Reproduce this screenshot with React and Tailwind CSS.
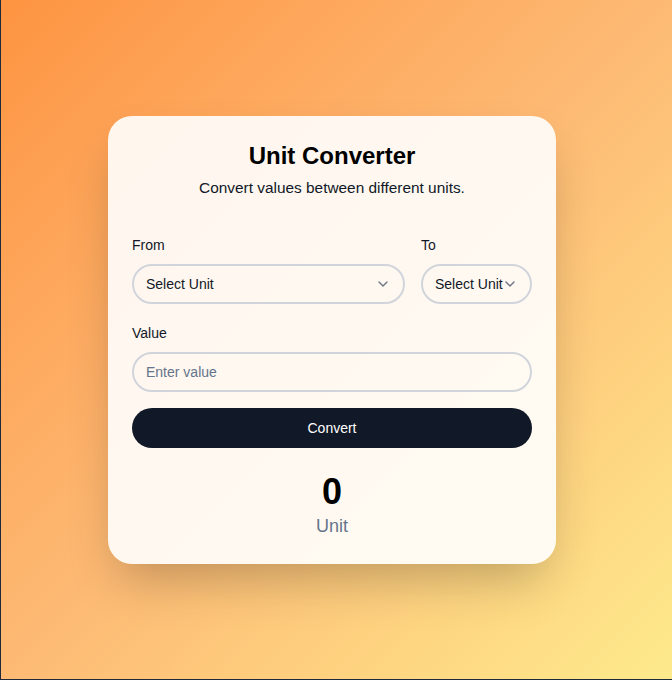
import React from "react";
import { ChevronDown } from "lucide-react";

export default function App() {
  return (
    <div className="w-[672px] h-[680px] bg-[#1e293b] pl-px pb-px" style={{ fontFamily: '"Liberation Sans", Arial, sans-serif' }}>
      <div className="w-full h-full bg-gradient-to-br from-[#fd9441] via-[#fdba74] to-[#fdea8c] flex items-center justify-center pr-[9px]">
        <div className="w-[448px] rounded-3xl bg-white/90 shadow-2xl p-6">
          <h1 className="text-2xl font-bold text-center text-black">Unit Converter</h1>
          <p className="mt-1 text-[15.4px] leading-6 text-center text-[#111827]">Convert values between different units.</p>

          <div className="mt-[35px] flex gap-4">
            <div className="flex-1">
              <label className="block text-sm text-[#111827] mb-[9px]">From</label>
              <button className="w-full h-10 rounded-full border-2 border-[#d1d5db] px-3 flex items-center justify-between text-sm text-[#111827]">
                <span>Select Unit</span>
                <ChevronDown className="w-4 h-4 text-[#6b7280]" />
              </button>
            </div>
            <div className="w-[111px]">
              <label className="block text-sm text-[#111827] mb-[9px]">To</label>
              <button className="w-full h-10 rounded-full border-2 border-[#d1d5db] pl-3 pr-3 flex items-center justify-between text-sm text-[#111827] whitespace-nowrap">
                <span>Select Unit</span>
                <ChevronDown className="w-4 h-4 shrink-0 -ml-1 text-[#6b7280]" />
              </button>
            </div>
          </div>

          <div className="mt-[19px]">
            <label className="block text-sm text-[#111827] mb-[9px]">Value</label>
            <input
              type="text"
              placeholder="Enter value"
              className="w-full h-10 rounded-full border-2 border-[#d1d5db] px-3 text-sm bg-transparent placeholder:text-[#64748b] outline-none"
            />
          </div>

          <button className="mt-4 w-full h-10 rounded-full bg-[#111827] text-white text-sm">Convert</button>

          <div className="mt-6 text-center">
            <div className="text-4xl font-bold text-black">0</div>
            <div className="text-lg leading-7 text-[#64748b]">Unit</div>
          </div>
        </div>
      </div>
    </div>
  );
}
